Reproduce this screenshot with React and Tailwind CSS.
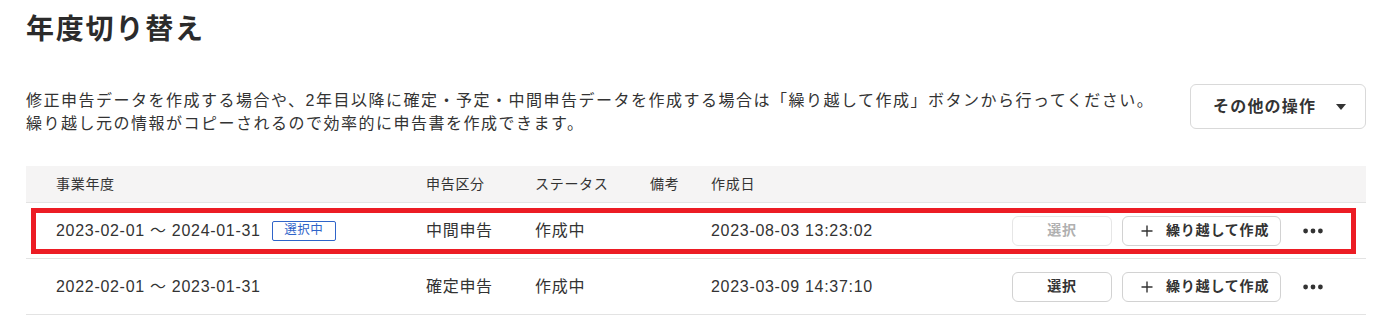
import React from "react";

const font = { fontFamily: '"Liberation Sans", "Noto Sans CJK JP", sans-serif' };

function Plus() {
  return (
    <svg width="12" height="12" viewBox="0 0 12 12" className="shrink-0">
      <path d="M6 0.5V11.5M0.5 6H11.5" stroke="#333" strokeWidth="1.4" />
    </svg>
  );
}

function Dots() {
  return (
    <svg width="20" height="6" viewBox="0 0 20 6">
      <circle cx="2.6" cy="3" r="2.4" fill="#333" />
      <circle cx="10" cy="3" r="2.4" fill="#333" />
      <circle cx="17.4" cy="3" r="2.4" fill="#333" />
    </svg>
  );
}

function Row({ period, badge, kind, status, date, disabled }) {
  return (
    <div className="relative flex items-center h-[56px] border-b border-[#e3e3e3] pl-[30px] text-[16px] tracking-[0.7px] text-[#333]">
      <div className="w-[370px] flex items-center">
        <span>{period}</span>
        {badge && (
          <span className="ml-[11px] inline-flex items-center justify-center h-[20px] w-[64px] border border-[#2f64c9] rounded-[2px] text-[12.5px] tracking-[0.5px] text-[#2f64c9]">
            選択中
          </span>
        )}
      </div>
      <div className="w-[109px]">{kind}</div>
      <div className="w-[115px]">{status}</div>
      <div className="w-[61px]"></div>
      <div className="flex-1">{date}</div>
      <div className="flex items-center gap-[10px]">
        <button
          className={
            disabled
              ? "w-[100px] h-[30px] rounded-[6px] border border-[#e6e6e6] text-[14px] font-bold text-[#b0b0b0] bg-white"
              : "w-[100px] h-[30px] rounded-[6px] border border-[#d2d2d2] text-[14px] font-bold text-[#333] bg-white"
          }
        >
          選択
        </button>
        <button className="w-[159px] h-[30px] rounded-[6px] border border-[#d2d2d2] bg-white flex items-center pl-[18px] gap-[13px] text-[14px] font-bold text-[#333]">
          <Plus />
          <span className="tracking-[0.8px]">繰り越して作成</span>
        </button>
      </div>
      <div className="ml-[22px] mr-[43px] flex items-center">
        <Dots />
      </div>
      {badge && (
        <div className="absolute left-[5px] top-[5px] w-[1325px] h-[46px] border-[5px] border-[#ec1c24] pointer-events-none" />
      )}
    </div>
  );
}

export default function App() {
  return (
    <div style={font} className="w-[1395px] h-[318px] bg-white overflow-hidden pl-[26px] pr-[29px] text-[#333]">
      <h1 className="mt-[12px] text-[28px] leading-[36px] font-bold tracking-[1.8px] text-[#2b2b2b]">
        年度切り替え
      </h1>
      <div className="mt-[36px] flex items-start justify-between">
        <p className="pt-[5px] text-[16px] leading-[23px] tracking-[1.5px] text-[#333]">
          修正申告データを作成する場合や、2年目以降に確定・予定・中間申告データを作成する場合は「繰り越して作成」ボタンから行ってください。
          <br />
          繰り越し元の情報がコピーされるので効率的に申告書を作成できます。
        </p>
        <button className="w-[176px] h-[45px] rounded-[6px] border border-[#d9d9d9] bg-white flex items-center pl-[22px] text-[16px] font-bold text-[#333] tracking-[1.2px]">
          <span>その他の操作</span>
          <svg width="10" height="6" viewBox="0 0 10 6" className="ml-[20px]">
            <path d="M0 0H10L5 6Z" fill="#333" />
          </svg>
        </button>
      </div>
      <div className="mt-[31px]">
        <div className="flex items-center h-[37px] bg-[#f5f4f4] border-b border-[#e3e3e3] pl-[30px] text-[14px] tracking-[0.7px] text-[#333]">
          <div className="w-[370px]">事業年度</div>
          <div className="w-[109px]">申告区分</div>
          <div className="w-[115px]">ステータス</div>
          <div className="w-[61px]">備考</div>
          <div className="flex-1">作成日</div>
        </div>
        <Row
          period="2023-02-01 ～ 2024-01-31"
          badge
          kind="中間申告"
          status="作成中"
          date="2023-08-03 13:23:02"
          disabled
        />
        <Row
          period="2022-02-01 ～ 2023-01-31"
          kind="確定申告"
          status="作成中"
          date="2023-03-09 14:37:10"
        />
      </div>
    </div>
  );
}
